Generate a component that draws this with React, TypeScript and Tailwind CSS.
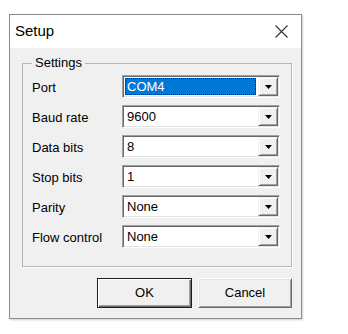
const ROWS = [
  { label: "Port", value: "COM4", focused: true },
  { label: "Baud rate", value: "9600" },
  { label: "Data bits", value: "8" },
  { label: "Stop bits", value: "1" },
  { label: "Parity", value: "None" },
  { label: "Flow control", value: "None" },
];

function Combo({ value, focused }: { value: string; focused?: boolean }) {
  return (
    <div className="h-[23px] w-[158px] flex bg-white border border-t-[#a0a0a0] border-l-[#a0a0a0] border-r-white border-b-white shadow-[inset_1px_1px_0_#696969,inset_-1px_-1px_0_#e3e3e3] p-[1px]">
      <div className="flex-1 flex items-center pl-[1px] pr-[2px] py-[1px] min-w-0">
        {focused ? (
          <div className="h-full w-full bg-[#0078d7] text-white outline-1 outline-dotted outline-offset-[-1px] outline-[#1b1b1b] flex items-center pl-[2px] leading-none">
            {value}
          </div>
        ) : (
          <span className="pl-[2px] leading-none">{value}</span>
        )}
      </div>
      <div className="w-[20px] h-full bg-[#f0f0f0] border border-t-[#f0f0f0] border-l-[#f0f0f0] border-r-[#696969] border-b-[#696969] shadow-[inset_1px_1px_0_#ffffff,inset_-1px_-1px_0_#a0a0a0] flex items-center justify-center">
        <svg width="7" height="4" viewBox="0 0 7 4">
          <path d="M0 0h7L3.5 4z" fill="#000" />
        </svg>
      </div>
    </div>
  );
}

export default function App() {
  return (
    <div
      className="w-[348px] h-[334px] bg-white pt-[14px] pl-[9px] text-[13px] text-black"
      style={{ fontFamily: '"Liberation Sans", Arial, sans-serif' }}
    >
      <div className="w-[293px] h-[305px] border border-[#8c8c8c] bg-[#f0f0f0] flex flex-col shadow-[1px_1px_2px_rgba(0,0,0,0.2)]">
        <div className="h-[33px] bg-white flex items-center justify-between pl-[5px] pr-[13px]">
          <span className="text-[15px]">Setup</span>
          <svg width="13" height="13" viewBox="0 0 13 13">
            <path d="M0.5 0.5l12 12M12.5 0.5l-12 12" stroke="#333" strokeWidth="1.1" />
          </svg>
        </div>

        <div className="flex-1 flex flex-col pt-[8px] pl-[12px] pr-[9px]">
          <fieldset className="w-[270px] h-[211px] border border-[#b5b5b5] shadow-[1px_1px_0_#fff] px-[9px] pt-[5px]">
            <legend className="px-[3px] leading-[14px]">Settings</legend>
            <div className="flex flex-col gap-[7px]">
              {ROWS.map((r) => (
                <div key={r.label} className="flex items-center">
                  <span className="w-[90px] pt-[3px]">{r.label}</span>
                  <Combo value={r.value} focused={r.focused} />
                </div>
              ))}
            </div>
          </fieldset>

          <div className="flex justify-end gap-[6px] mt-[11px]">
            <button className="w-[95px] h-[30px] bg-[#f0f0f0] border border-[#1e1e1e] shadow-[inset_1px_1px_0_#fff,inset_-1px_-1px_0_#696969,inset_-2px_-2px_0_#a0a0a0]">
              OK
            </button>
            <button className="w-[94px] h-[30px] bg-[#f0f0f0] border border-t-white border-l-white border-r-[#696969] border-b-[#696969] shadow-[inset_1px_1px_0_#e3e3e3,inset_-1px_-1px_0_#a0a0a0]">
              Cancel
            </button>
          </div>
        </div>
      </div>
    </div>
  );
}
